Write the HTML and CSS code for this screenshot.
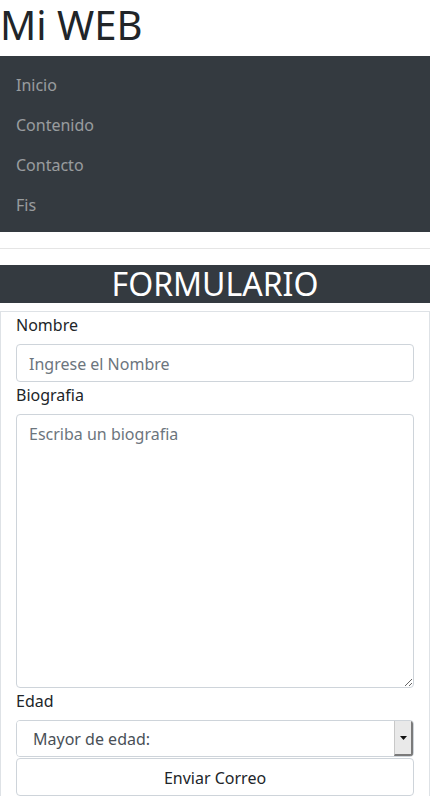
FILE: index.html
```html
<!DOCTYPE html>
<html lang="es">
<head>
<meta charset="utf-8">
<title>Mi WEB</title>
<link rel="stylesheet" href="styles.css">
</head>
<body>
<h1 class="title">Mi WEB</h1>
<nav class="navbar">
  <a class="nav-link" href="#">Inicio</a>
  <a class="nav-link" href="#">Contenido</a>
  <a class="nav-link" href="#">Contacto</a>
  <a class="nav-link" href="#">Fis</a>
</nav>
<hr class="divider">
<h2 class="band">FORMULARIO</h2>
<form class="form-box">
  <div class="group">
    <label class="label" for="nombre">Nombre</label>
    <input class="control" id="nombre" type="text" placeholder="Ingrese el Nombre">
  </div>
  <div class="group">
    <label class="label" for="bio">Biografia</label>
    <textarea class="control area" id="bio" placeholder="Escriba un biografia"></textarea>
  </div>
  <div class="group">
    <label class="label" for="edad">Edad</label>
    <div class="select-wrap">
      <select class="select" id="edad"><option>Mayor de edad:</option></select>
      <span class="select-arrow"><svg width="7" height="4" viewBox="0 0 7 4"><path d="M0 0h7L3.5 4z" fill="#111"/></svg></span>
    </div>
  </div>
  <button class="btn" type="button">Enviar Correo</button>
</form>
</body>
</html>
```
FILE: styles.css
```css
* { box-sizing: border-box; }
body {
  margin: 0;
  font-family: "Noto Sans", "Open Sans", sans-serif;
  font-size: 16px;
  line-height: 1.5;
  color: #212529;
  background: #fff;
}
.title {
  margin: 0 0 8px;
  padding-top: 1px;
  height: 48px;
  font-size: 40px;
  font-weight: 400;
  line-height: 1.2;
}
.navbar {
  display: flex;
  flex-direction: column;
  background: #343a40;
  padding: 8px 0;
}
.nav-link {
  padding: 9px 16px 7px;
  color: rgba(255,255,255,.5);
  text-decoration: none;
}
.divider {
  margin: 16px 0;
  border: 0;
  border-top: 1px solid rgba(0,0,0,.1);
}
.band {
  margin: 0 0 8px;
  background: #343a40;
  color: #fff;
  text-align: center;
  font-size: 32px;
  font-weight: 400;
  line-height: 1.2;
}
.form-box {
  border: 1px solid #dee2e6;
  border-bottom: 0;
  padding: 0 15px;
  display: flex;
  flex-direction: column;
}
.group { display: flex; flex-direction: column; }
.label { margin-bottom: 7px; padding-top: 1px; }
.control {
  display: block;
  width: 100%;
  height: 38px;
  padding: 7px 12px 5px;
  font: inherit;
  color: #495057;
  border: 1px solid #ced4da;
  border-radius: 4px;
  background: #fff;
}
.control::placeholder { color: #6c757d; }
.area { height: 274px; resize: vertical; }
.select-wrap {
  display: flex;
  height: 37px;
  border: 1px solid #ced4da;
  border-radius: 4px;
  overflow: hidden;
}
.select {
  flex: 1;
  appearance: none;
  -webkit-appearance: none;
  border: 0;
  background: #fff;
  font: inherit;
  color: #495057;
  padding: 1px 16px 0;
}
.select-arrow {
  width: 19px;
  display: flex;
  align-items: center;
  justify-content: center;
  background: #e9e9e9;
  border-left: 1px solid #c8c8c8;
  border-right: 2px solid #7a7a7a;
  border-bottom: 2px solid #7a7a7a;
}
.btn {
  margin-top: 1px;
  height: 38px;
  padding-top: 2px;
  font: inherit;
  color: #212529;
  background: #fff;
  border: 1px solid #ced4da;
  border-radius: 4px;
}
```
